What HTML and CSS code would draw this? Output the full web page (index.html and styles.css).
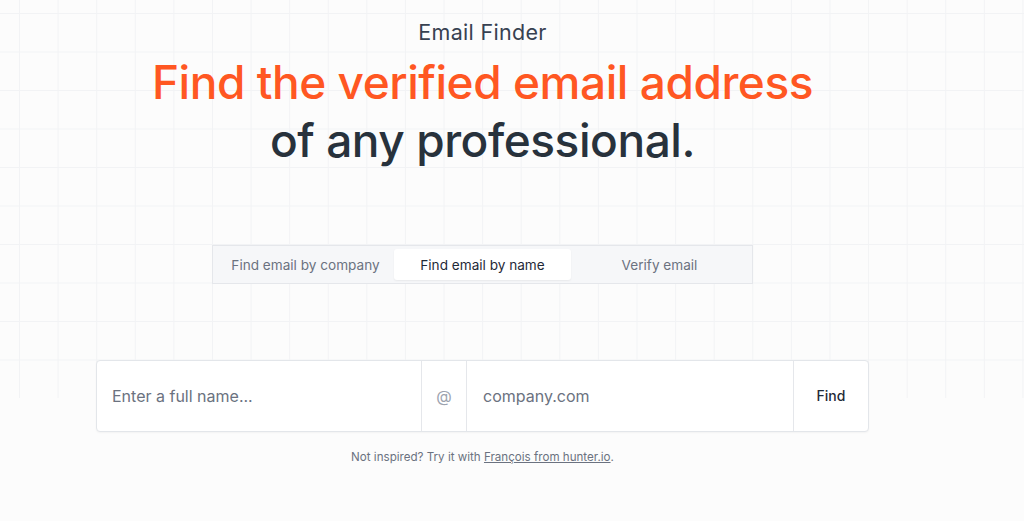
FILE: index.html
```html
<!DOCTYPE html>
<html lang="en">
<head>
<meta charset="utf-8">
<title>Email Finder</title>
<link rel="stylesheet" href="styles.css">
</head>
<body>
<main class="page">
  <div class="column">
    <p class="eyebrow">Email Finder</p>
    <h1 class="headline">
      <span class="accent">Find the verified email address</span>
      <span class="dark">of any professional.</span>
    </h1>
    <nav class="tabs">
      <a class="tab">Find email by company</a>
      <a class="tab active">Find email by name</a>
      <a class="tab">Verify email</a>
    </nav>
    <form class="finder">
      <input class="field name" type="text" placeholder="Enter a full name...">
      <span class="at">@</span>
      <input class="field domain" type="text" placeholder="company.com">
      <button class="find" type="button">Find</button>
    </form>
    <p class="hint">Not inspired? Try it with <a class="link">François from hunter.io</a>.</p>
  </div>
</main>
</body>
</html>
```
FILE: styles.css
```css
html, body {
  margin: 0;
  padding: 0;
}
body {
  font-family: Inter, "Noto Sans", "Liberation Sans", sans-serif;
  background-color: #fcfcfc;
  background-image:
    linear-gradient(#fcfcfc, #fcfcfc),
    linear-gradient(to right, #f2f3f5 1px, transparent 1px),
    linear-gradient(to bottom, #f2f3f5 1px, transparent 1px);
  background-size: 100% 100%, 38.6px 38.5px, 38.6px 38.5px;
  background-position: 0 398px, 19px 13px, 19px 13px;
  background-repeat: no-repeat, repeat, repeat;
  min-height: 521px;
}
.page {
  width: 965px;
}
.column {
  display: flex;
  flex-direction: column;
  align-items: center;
  padding-top: 20px;
}
.eyebrow {
  margin: 0;
  font-size: 21.5px;
  line-height: 24px;
  letter-spacing: 0.3px;
  color: #374151;
  font-weight: 400;
}
.headline {
  margin: 9px 0 0;
  display: flex;
  flex-direction: column;
  align-items: center;
  font-size: 46px;
  line-height: 58px;
  font-weight: 500;
  letter-spacing: -0.45px;
}
.accent {
  color: #ff5722;
}
.dark {
  color: #28323c;
}
.tabs {
  margin-top: 76px;
  display: grid;
  grid-template-columns: repeat(3, 177px);
  padding: 3px 4px;
  background: #f6f7f9;
  border: 1px solid #e5e7eb;
}
.tab {
  height: 31px;
  display: flex;
  align-items: center;
  justify-content: center;
  font-size: 13.6px;
  color: #6b7280;
  border-radius: 3px;
}
.tab.active {
  background: #ffffff;
  color: #1f2937;
  box-shadow: 0 1px 2px rgba(0, 0, 0, 0.06);
}
.finder {
  margin: 76px 0 0;
  width: 773px;
  height: 72px;
  box-sizing: border-box;
  display: flex;
  background: #ffffff;
  border: 1px solid #e3e6ea;
  border-radius: 4px;
  box-shadow: 0 1px 2px rgba(0, 0, 0, 0.04);
}
.field {
  border: none;
  outline: none;
  background: transparent;
  font-family: inherit;
  font-size: 16px;
  color: #1f2937;
  padding: 0 15px;
  min-width: 0;
}
.field::placeholder {
  color: #6b7280;
}
.name {
  width: 324px;
  box-sizing: border-box;
}
.domain {
  flex: 1;
  padding-left: 16px;
}
.at {
  width: 46px;
  box-sizing: border-box;
  display: flex;
  align-items: center;
  justify-content: center;
  border-left: 1px solid #e5e7eb;
  border-right: 1px solid #e5e7eb;
  color: #9ca3af;
  font-size: 16px;
}
.find {
  width: 75px;
  border: none;
  border-left: 1px solid #e5e7eb;
  background: transparent;
  font-family: inherit;
  font-size: 14px;
  font-weight: 500;
  color: #1f2937;
  padding: 0 0 2px;
  border-radius: 0 4px 4px 0;
}
.hint {
  margin: 17px 0 0;
  font-size: 11.6px;
  line-height: 16px;
  color: #6b7280;
}
.link {
  color: #6b7280;
  text-decoration: underline;
}
```
